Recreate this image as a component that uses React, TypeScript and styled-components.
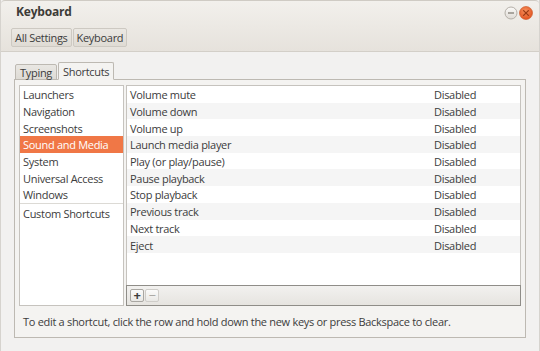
import styled, { createGlobalStyle } from 'styled-components';

const GlobalStyle = createGlobalStyle`
    html, body {
        margin: 0;
        padding: 0;
        background: #f2f1f0;
    }
    body {
        font-family: "Open Sans", "Noto Sans", sans-serif;
        font-size: 11px;
        letter-spacing: -0.3px;
        color: #3c3c3c;
    }
`;

const categories = [
    "Launchers",
    "Navigation",
    "Screenshots",
    "Sound and Media",
    "System",
    "Universal Access",
    "Windows",
];

const shortcuts = [
    "Volume mute",
    "Volume down",
    "Volume up",
    "Launch media player",
    "Play (or play/pause)",
    "Pause playback",
    "Stop playback",
    "Previous track",
    "Next track",
    "Eject",
];

const App = () => {
    return (
        <>
            <GlobalStyle />
            <Window>
                <Header>
                    <TitleRow>
                        <Title>Keyboard</Title>
                        <WindowControls>
                            <svg width="30" height="16" viewBox="0 0 30 16">
                                <defs>
                                    <linearGradient id="minG" x1="0" y1="0" x2="0" y2="1">
                                        <stop offset="0" stopColor="#fbfaf8" />
                                        <stop offset="1" stopColor="#dedad4" />
                                    </linearGradient>
                                    <radialGradient id="closeG" cx="0.45" cy="0.35" r="0.7">
                                        <stop offset="0" stopColor="#f7905c" />
                                        <stop offset="1" stopColor="#df4f1c" />
                                    </radialGradient>
                                </defs>
                                <circle cx="8" cy="8" r="6" fill="url(#minG)" stroke="#b4afa8" strokeWidth="1" />
                                <line x1="5" y1="8" x2="11" y2="8" stroke="#8c877f" strokeWidth="1.4" />
                                <circle cx="23" cy="8" r="6.5" fill="url(#closeG)" stroke="#c9501f" strokeWidth="0.6" />
                                <path d="M20.6 5.6 L25.4 10.4 M25.4 5.6 L20.6 10.4" stroke="#9a3a14" strokeWidth="1.3" strokeLinecap="round" />
                            </svg>
                        </WindowControls>
                    </TitleRow>
                    <Toolbar>
                        <Breadcrumb>
                            <CrumbButton>All Settings</CrumbButton>
                            <CrumbButton>Keyboard</CrumbButton>
                        </Breadcrumb>
                    </Toolbar>
                </Header>
                <Content>
                    <TabRow>
                        <Tab>Typing</Tab>
                        <Tab $active>Shortcuts</Tab>
                    </TabRow>
                    <Notebook>
                        <Panes>
                            <CategoryList>
                                {categories.map(name => (
                                    <CategoryItem key={name} $selected={name === "Sound and Media"}>
                                        {name}
                                    </CategoryItem>
                                ))}
                                <ListSeparator />
                                <CategoryItem>Custom Shortcuts</CategoryItem>
                            </CategoryList>
                            <ShortcutPane>
                                <ShortcutList>
                                    {shortcuts.map((name, i) => (
                                        <ShortcutRow key={name} $odd={i % 2 === 1}>
                                            <span className="sr-name">{name}</span>
                                            <span className="sr-key">Disabled</span>
                                        </ShortcutRow>
                                    ))}
                                </ShortcutList>
                                <ListToolbar>
                                    <SmallButton>+</SmallButton>
                                    <SmallButton $disabled>−</SmallButton>
                                </ListToolbar>
                            </ShortcutPane>
                        </Panes>
                        <Hint>
                            To edit a shortcut, click the row and hold down the new keys or press Backspace to clear.
                        </Hint>
                    </Notebook>
                </Content>
            </Window>
        </>
    );
}

export default App;

const Window = styled.div`
    width: 540px;
    height: 351px;
    display: flex;
    flex-direction: column;
    background: #f2f1f0;
    box-sizing: border-box;
    border-left: 1px solid #d6d3ce;
    border-right: 1px solid #d6d3ce;
    overflow: hidden;
`;

const Header = styled.div`
    height: 52px;
    display: flex;
    flex-direction: column;
    background: linear-gradient(#f2f0ec, #e6e2dc);
    border-bottom: 1px solid #d3cfc8;
    border-top: 1px solid #cfcbc4;
    border-radius: 4px 4px 0 0;
    box-sizing: border-box;
`;

const TitleRow = styled.div`
    height: 21px;
    display: flex;
    align-items: center;
    justify-content: space-between;
    padding: 0 6px 0 15px;
`;

const Title = styled.span`
    font-weight: bold;
    font-size: 12px;
    letter-spacing: -0.2px;
    color: #3c3b37;
`;

const WindowControls = styled.div`
    display: flex;
    align-items: center;
    padding-top: 2px;
`;

const Toolbar = styled.div`
    flex: 1;
    display: flex;
    align-items: flex-start;
    padding: 6px 0 0 10px;
`;

const Breadcrumb = styled.div`
    display: flex;
    gap: 1px;
`;

const CrumbButton = styled.div`
    height: 19px;
    box-sizing: border-box;
    display: flex;
    align-items: center;
    padding: 0 3px;
    border: 1px solid #cdc9c2;
    border-radius: 2px;
    background: linear-gradient(#ebe8e3, #dfdbd4);
    color: #3c3c3c;
    font-size: 11px;
`;

const Content = styled.div`
    flex: 1;
    display: flex;
    flex-direction: column;
    padding: 11px 13px 13px 13px;
`;

const TabRow = styled.div`
    display: flex;
    align-items: flex-end;
    gap: 1px;
    padding-left: 1px;
    height: 17px;
    position: relative;
    z-index: 1;
    margin-bottom: -1px;
`;

const Tab = styled.div<{ $active?: boolean }>`
    box-sizing: border-box;
    height: ${p => (p.$active ? "18px" : "16px")};
    display: flex;
    align-items: center;
    padding: 0 4px;
    border: 1px solid #bdb9b2;
    border-bottom: ${p => (p.$active ? "1px solid #f4f3f1" : "1px solid #bdb9b2")};
    border-radius: 2px 2px 0 0;
    background: ${p => (p.$active ? "#f4f3f1" : "linear-gradient(#e9e7e3, #dedbd5)")};
    color: #3c3c3c;
`;

const Notebook = styled.div`
    flex: 1;
    display: flex;
    flex-direction: column;
    border: 1px solid #bdb9b2;
    background: #f4f3f1;
    padding: 5px 4px 0 4px;
`;

const Panes = styled.div`
    height: 221px;
    display: flex;
    gap: 2px;
`;

const CategoryList = styled.div`
    width: 105px;
    box-sizing: border-box;
    border: 1px solid #c6c3be;
    background: #ffffff;
    display: flex;
    flex-direction: column;
`;

const CategoryItem = styled.div<{ $selected?: boolean }>`
    height: 16.7px;
    box-sizing: border-box;
    display: flex;
    align-items: center;
    padding-left: 3px;
    padding-top: 1px;
    white-space: nowrap;
    background: ${p => (p.$selected ? "#f07746" : "transparent")};
    color: ${p => (p.$selected ? "#ffffff" : "#3c3c3c")};
`;

const ListSeparator = styled.div`
    height: 1px;
    margin: 0 0 1px;
    background: #dcdad5;
`;

const ShortcutPane = styled.div`
    flex: 1;
    display: flex;
    flex-direction: column;
`;

const ShortcutList = styled.div`
    flex: 1;
    box-sizing: border-box;
    border: 1px solid #c6c3be;
    border-bottom: none;
    background: #ffffff;
`;

const ShortcutRow = styled.div<{ $odd?: boolean }>`
    height: 16.7px;
    box-sizing: border-box;
    display: flex;
    align-items: center;
    padding-left: 3px;
    padding-top: 1px;
    background: ${p => (p.$odd ? "#f5f5f5" : "#ffffff")};
    .sr-name {
        width: 304px;
    }
`;

const ListToolbar = styled.div`
    height: 21px;
    box-sizing: border-box;
    border: 1px solid #8f8d88;
    background: linear-gradient(#f2f1ef, #e6e4e0);
    display: flex;
    align-items: center;
    padding-left: 3px;
    gap: 1px;
`;

const SmallButton = styled.div<{ $disabled?: boolean }>`
    width: 14px;
    height: 13px;
    box-sizing: border-box;
    border: 1px solid ${p => (p.$disabled ? "#cfcdc9" : "#a9a7a2")};
    border-radius: 2px;
    background: linear-gradient(#fbfbfa, #e9e8e5);
    display: flex;
    align-items: center;
    justify-content: center;
    font-size: 13px;
    font-weight: ${p => (p.$disabled ? "normal" : "bold")};
    line-height: 1;
    color: ${p => (p.$disabled ? "#a8a6a2" : "#3c3c3c")};
`;

const Hint = styled.div`
    flex: 1;
    display: flex;
    align-items: center;
    padding-left: 4px;
    padding-bottom: 1px;
    white-space: nowrap;
`;
